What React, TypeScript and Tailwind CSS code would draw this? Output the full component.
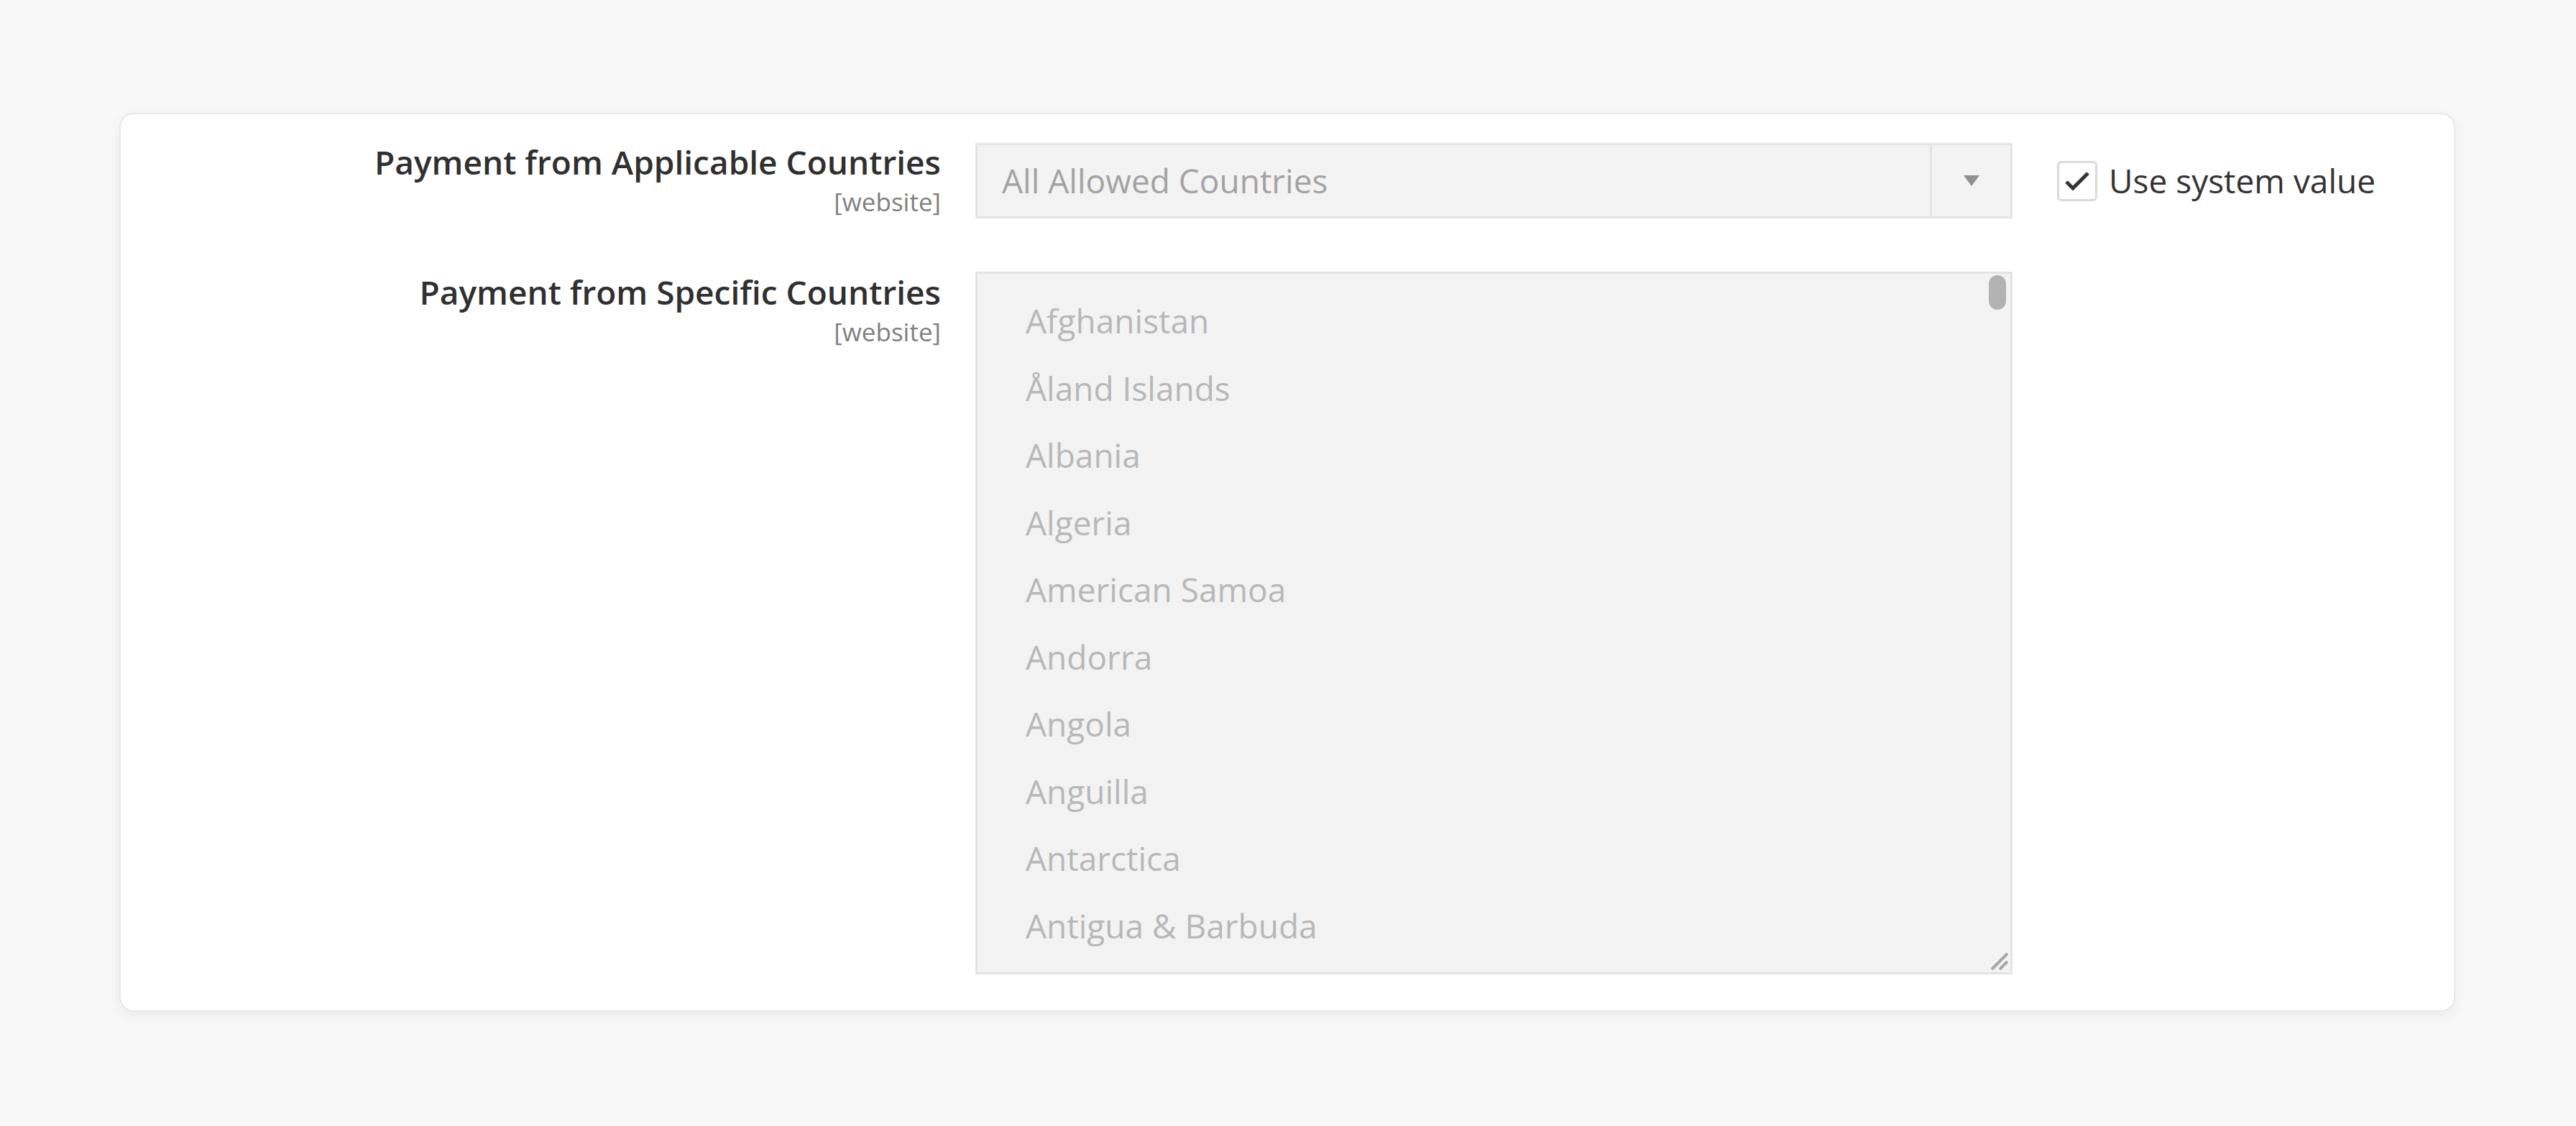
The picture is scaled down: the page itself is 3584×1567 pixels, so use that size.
import React from 'react';

const countries = [
  'Afghanistan',
  'Åland Islands',
  'Albania',
  'Algeria',
  'American Samoa',
  'Andorra',
  'Angola',
  'Anguilla',
  'Antarctica',
  'Antigua & Barbuda',
];

const FieldLabel: React.FC<{ title: string }> = ({ title }) => (
  <div className="flex flex-col items-end text-right">
    <span className="text-[46px] font-semibold leading-[63px] text-[#303030]">{title}</span>
    <span className="text-[35px] leading-[48px] text-[#808080]">[website]</span>
  </div>
);

const App: React.FC = () => {
  return (
    <div className="min-h-screen w-full bg-[#f8f8f8] pt-[157px] pl-[166px] font-['Open_Sans',sans-serif]">
      <div className="w-[3250px] h-[1251px] rounded-[20px] border-2 border-[#e8e8e8] bg-white shadow-[0_6px_18px_rgba(0,0,0,0.06)] pt-[40px]">
        <div className="grid grid-cols-[1141px_1443px_auto] gap-x-[48px] gap-y-[73px]">
          {/* Row 1 */}
          <div className="-mt-[5px]">
            <FieldLabel title="Payment from Applicable Countries" />
          </div>
          <div className="flex h-[105px] border-[3px] border-[#e4e4e4] bg-[#f3f3f3]">
            <div className="flex flex-1 items-center pl-[34px] text-[46px] text-[#a3a3a3]">
              All Allowed Countries
            </div>
            <div className="flex w-[112px] items-center justify-center border-l-[3px] border-[#e4e4e4]">
              <svg width="22" height="15" viewBox="0 0 22 15">
                <polygon points="0,0 22,0 11,15" fill="#8f8f8f" />
              </svg>
            </div>
          </div>
          <div className="flex h-[105px] items-center gap-[16px] pl-[14px]">
            <div className="flex h-[56px] w-[56px] items-center justify-center rounded-[6px] border-[3px] border-[#dadada] bg-white">
              <svg width="38" height="30" viewBox="0 0 38 30">
                <path d="M4 16 L13 25 L34 4" fill="none" stroke="#333333" strokeWidth="5" />
              </svg>
            </div>
            <span className="text-[46px] text-[#333333]">Use system value</span>
          </div>

          {/* Row 2 */}
          <div className="-mt-[3px]">
            <FieldLabel title="Payment from Specific Countries" />
          </div>
          <div className="relative h-[978px] border-[3px] border-[#e4e4e4] bg-[#f3f3f3] pt-[19px] pl-[67px]">
            {countries.map((c) => (
              <div key={c} className="flex h-[93.5px] items-center text-[46px] text-[#b8b8b8]">
                {c}
              </div>
            ))}
            <div className="absolute right-[6px] top-[2px] h-[48px] w-[24px] rounded-full bg-[#b3b3b3]" />
            <svg className="absolute bottom-[2px] right-[2px]" width="30" height="30" viewBox="0 0 30 30">
              <path d="M6 28 L28 6 M17 28 L28 17" stroke="#a8a8a8" strokeWidth="4" />
            </svg>
          </div>
          <div />
        </div>
      </div>
    </div>
  );
};

export default App;
